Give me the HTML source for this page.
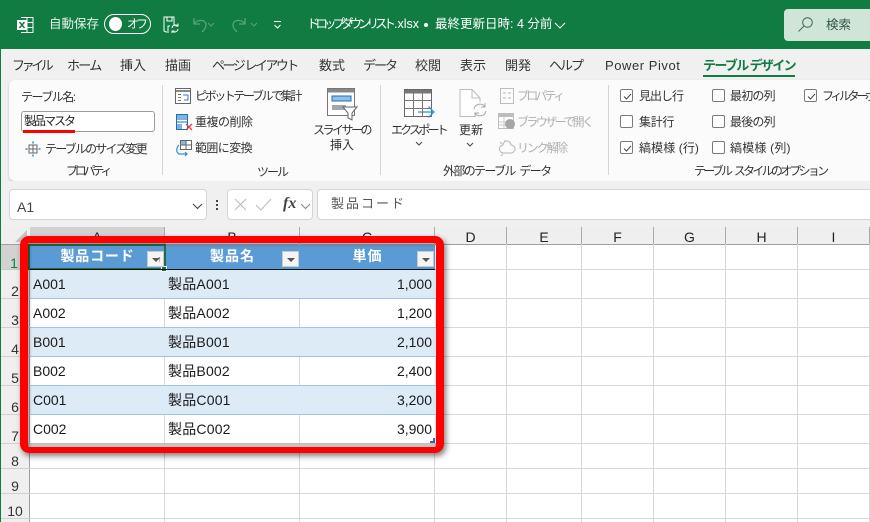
<!DOCTYPE html>
<html><head><meta charset="utf-8"><style>
*{box-sizing:border-box}
html,body{margin:0;padding:0}
body{width:870px;height:522px;overflow:hidden;position:relative;background:#fff;font-family:"Liberation Sans","Noto Sans CJK JP",sans-serif;color:#333}
.a{position:absolute;white-space:nowrap}
.t{position:absolute;white-space:nowrap;font-size:12px;line-height:16px;color:#333}
.tb{position:absolute;white-space:nowrap;font-size:13px;line-height:18px;top:57px;color:#333}
.g{color:#b0b0b0}
.hl{position:absolute;left:30px;width:840px;height:1px;background:#d8d8d8}
.vl{position:absolute;top:244px;height:278px;width:1px;background:#d8d8d8}
.rn{position:absolute;left:1px;width:28px;text-align:center;font-size:14px;line-height:16px;color:#333}
.cn{position:absolute;top:229px;text-align:center;font-size:14px;line-height:16px;color:#222}
.cell{position:absolute;font-size:14px;line-height:18px;color:#1a1a1a;white-space:nowrap}
.hd{position:absolute;top:245px;height:24px;background:#5b9bd5;color:#fff;font-weight:bold;font-size:14px;line-height:22px;text-align:center}
.fb{position:absolute;top:251px;width:17px;height:16px;background:#f4f4f4;border:1px solid #c9c9c9}
.fb:after{content:"";position:absolute;left:4px;top:6px;border-left:4px solid transparent;border-right:4px solid transparent;border-top:4px solid #555}
.cb{position:absolute;width:13px;height:13px;border:1px solid #7a7a7a;border-radius:2px;background:#fff}
.cb svg{position:absolute;left:1px;top:1px}
</style></head><body>
<!-- title bar -->
<div class="a" style="left:0;top:0;width:870px;height:49px;background:#107c41"></div>
<svg class="a" style="left:16px;top:15px" width="18" height="19" viewBox="0 0 18 19"><path d="M5 2.5H17V17.5H5M11 2.5V17.5M5 7.5H17M5 12.5H17" fill="none" stroke="#fff" stroke-width="1"/><rect x="1" y="5" width="10" height="10" fill="#fff"/><path d="M3.5 7l5 6M8.500 7l-5 6" stroke="#107c41" stroke-width="1.500"/></svg>
<div class="a" style="left:49px;top:16px;font-size:12.500px;line-height:17px;color:#e6f2ea">自動保存</div>
<div class="a" style="left:104px;top:14px;width:47px;height:20px;border:1px solid #fff;border-radius:10px"></div>
<div class="a" style="left:109px;top:17px;width:13px;height:14px;border-radius:50%;background:#fff"></div>
<div class="a" style="left:127px;top:16px;font-size:12px;line-height:17px;color:#fff;letter-spacing:-3px">オフ</div>
<svg class="a" style="left:163px;top:16px" width="17" height="17" viewBox="0 0 17 17"><path d="M11 10V1H1V15l2 1h3M4 1v4h5V1M5 15V10h2" fill="none" stroke="#fff" stroke-width="1"/><path d="M9 12a3.500 3.500 0 0 1 6-2M15 13a3.500 3.500 0 0 1-6 2M15 7.500V10h-2.500M9 17.500V15h2.500" fill="none" stroke="#fff" stroke-width="1"/></svg>
<svg class="a" style="left:192px;top:16px" width="34" height="18" viewBox="0 0 34 18"><path d="M2 2V8H8M2 8C5 3 14 3 14 9C14 12 12 14 10 16" fill="none" stroke="#5aa37d" stroke-width="1.300"/><path d="M22 7l3 3 3-3" fill="none" stroke="#5aa37d" stroke-width="1" transform="translate(-6 0)"/></svg>
<svg class="a" style="left:231px;top:16px" width="34" height="18" viewBox="0 0 34 18"><path d="M14 2V8H8M14 8C11 3 2 3 2 9C2 12 4 14 6 16" fill="none" stroke="#5aa37d" stroke-width="1.300"/><path d="M20 7l3 3 3-3" fill="none" stroke="#5aa37d" stroke-width="1"/></svg>
<svg class="a" style="left:273px;top:20px" width="10" height="10" viewBox="0 0 10 10"><path d="M1 1.500H8M1.500 5l3 3 3-3" fill="none" stroke="#fff" stroke-width="1"/></svg>
<div class="a" style="left:307px;top:16px;font-size:12.500px;line-height:17px;color:#fff"><span style="letter-spacing:-4px">ドロップダウンリスト</span><span style="margin-left:2px">.xlsx</span></div>
<div class="a" style="left:424px;top:23px;width:4px;height:4px;border-radius:50%;background:#fff"></div>
<div class="a" style="left:435px;top:16px;font-size:12.500px;line-height:17px;color:#fff">最終更新日時: 4 分前</div>
<svg class="a" style="left:554px;top:22px" width="12" height="8" viewBox="0 0 12 8"><path d="M1 1l5 5 5-5" fill="none" stroke="#fff" stroke-width="1.100"/></svg>
<div class="a" style="left:784px;top:9px;width:86px;height:32px;background:#cfe5d8;border-radius:4px 0 0 4px"></div>
<svg class="a" style="left:797px;top:16px" width="17" height="17" viewBox="0 0 17 17"><circle cx="10.500" cy="6.500" r="4.800" fill="none" stroke="#3f6b52" stroke-width="1"/><path d="M7 10L1.500 15.500" stroke="#3f6b52" stroke-width="1"/></svg>
<div class="a" style="left:826px;top:16px;font-size:12.500px;line-height:18px;color:#33584a">検索</div>
<!-- tab row -->
<div class="a" style="left:0;top:49px;width:870px;height:141px;background:#f0f0f0"></div>
<div class="a" style="left:0;top:49px;width:1px;height:473px;background:#107c41"></div>
<div class="tb" style="left:12px;letter-spacing:-3.400px">ファイル</div>
<div class="tb" style="left:67px;letter-spacing:-1.700px">ホーム</div>
<div class="tb" style="left:120px">挿入</div>
<div class="tb" style="left:165px">描画</div>
<div class="tb" style="left:212px;letter-spacing:-2.500px">ページ レイアウト</div>
<div class="tb" style="left:319px">数式</div>
<div class="tb" style="left:363px;letter-spacing:-2px">データ</div>
<div class="tb" style="left:415px">校閲</div>
<div class="tb" style="left:460px">表示</div>
<div class="tb" style="left:505px">開発</div>
<div class="tb" style="left:549px;letter-spacing:-2px">ヘルプ</div>
<div class="tb" style="left:605px;letter-spacing:.55px">Power Pivot</div>
<div class="tb" style="left:703px;color:#107c41;font-weight:bold;letter-spacing:-1.650px">テーブル デザイン</div>
<div class="a" style="left:703px;top:75px;width:92px;height:2px;background:#107c41"></div>
<!-- ribbon -->
<div class="a" style="left:9px;top:80px;width:861px;height:101px;background:#fbfbfb;border-radius:6px 0 0 6px;box-shadow:0 1px 2px #bbb"></div>
<div class="a" style="left:162px;top:85px;width:1px;height:90px;background:#d5d5d5"></div>
<div class="a" style="left:380px;top:85px;width:1px;height:90px;background:#d5d5d5"></div>
<div class="a" style="left:608px;top:85px;width:1px;height:90px;background:#d5d5d5"></div>
<div class="t" style="left:21px;top:89px;letter-spacing:-1.500px">テーブル名:</div>
<div class="a" style="left:21px;top:111px;width:134px;height:21px;background:#fff;border:1px solid #9a9a9a;border-radius:3px"></div>
<div class="t" style="left:24px;top:113px;color:#222;letter-spacing:-2px">製品マスタ</div>
<div class="a" style="left:23px;top:130px;width:52px;height:3px;background:#ff0000"></div>
<svg class="a" style="left:25px;top:141px" width="16" height="16" viewBox="0 0 16 16"><rect x="4" y="4" width="8" height="8" fill="none" stroke="#666"/><path d="M4 8h8M8 4v8" stroke="#666"/><path d="M8 .5v2M8 13.500v2M.5 8h2M13.500 8h2" stroke="#2b8fd8" stroke-width="1.500"/></svg>
<div class="t" style="left:45px;top:141px;letter-spacing:-1.800px">テーブルのサイズ変更</div>
<div class="t" style="left:66px;top:163px;letter-spacing:-3.200px">プロパティ</div>
<svg class="a" style="left:175px;top:88px" width="16" height="16" viewBox="0 0 16 16"><rect x=".5" y=".5" width="15" height="15" fill="#fff" stroke="#666"/><path d="M1 3h14" stroke="#888" stroke-width="2"/><path d="M3 6h3v1H3zM3 9h3v1H3zM3 12h3v1H3z" fill="#777"/><path d="M8 7h5v5H9" fill="none" stroke="#2b7cd3"/></svg>
<div class="t" style="left:195px;top:88px;letter-spacing:-2.400px">ピボットテーブルで集計</div>
<svg class="a" style="left:176px;top:114px" width="17" height="17" viewBox="0 0 17 17"><rect x=".5" y=".5" width="11" height="15" fill="#fff" stroke="#1f6fb5"/><rect x="1" y="1" width="10" height="5" fill="#7fb2df"/><rect x="1" y="10" width="5" height="5" fill="#7fb2df"/><path d="M.5 8h11" stroke="#1f6fb5"/><path d="M10 10l6 6M16 10l-6 6" stroke="#e04040" stroke-width="1.300"/></svg>
<div class="t" style="left:195px;top:114px;letter-spacing:-.5px">重複の削除</div>
<svg class="a" style="left:175px;top:140px" width="18" height="17" viewBox="0 0 18 17"><rect x="5.500" y=".5" width="11" height="9" fill="#fff" stroke="#666"/><rect x="6" y="1" width="5" height="4" fill="#8fb9dc"/><path d="M5.500 5h11M11 1v8" stroke="#666"/><path d="M4 5C1 8 1 12 4 14H12M10 12l2 2-2 2" fill="none" stroke="#2b8fd8" stroke-width="1.200"/></svg>
<div class="t" style="left:195px;top:140px;letter-spacing:-.6px">範囲に変換</div>
<div class="t" style="left:257px;top:164px;letter-spacing:-2px">ツール</div>
<svg class="a" style="left:327px;top:88px" width="32" height="33" viewBox="0 0 32 33"><rect x=".5" y=".5" width="27" height="27" fill="#fff" stroke="#777"/><rect x="1" y="1" width="26" height="3.500" fill="#888"/><rect x="5" y="8" width="19" height="5" fill="#8fc0e8" stroke="#1f6fb5"/><rect x="5" y="17" width="14" height="5" fill="#a6a6a6"/><path d="M16 19H30L25 25V32L21 30V25Z" fill="#fff" stroke="#666"/></svg>
<div class="t" style="left:313px;top:122px;letter-spacing:-2.500px">スライサーの</div>
<div class="t" style="left:330px;top:137px;">挿入</div>
<svg class="a" style="left:404px;top:89px" width="31" height="30" viewBox="0 0 31 30"><rect x=".5" y=".5" width="27" height="27" fill="#fff" stroke="#666"/><rect x="1" y="1" width="26" height="3.500" fill="#777"/><path d="M.5 11.500h27M.5 19.500h27M9.500 4v24M18.500 4v24" stroke="#777"/><path d="M14 23H29M24.500 17.500L30 23L24.500 28.500" fill="none" stroke="#2b8fd8" stroke-width="1.200"/></svg>
<div class="t" style="left:391px;top:122px;letter-spacing:-2.800px">エクスポート</div>
<svg class="a" style="left:415px;top:141px" width="8" height="6" viewBox="0 0 8 6"><path d="M1 1l3 3 3-3" fill="none" stroke="#444"/></svg>
<svg class="a" style="left:459px;top:89px" width="29" height="30" viewBox="0 0 29 30"><path d="M1 .5H13L21 9V27.500H1Z" fill="#fff" stroke="#bdbdbd"/><path d="M13 1V9H21" fill="none" stroke="#bdbdbd"/><circle cx="21" cy="21" r="8" fill="#fbfbfb"/><path d="M15 20a6 6 0 0 1 11-2M27 22a6 6 0 0 1-11 2M26 14v4h-4M16 28v-4h4" fill="none" stroke="#a8a8a8"/></svg>
<div class="t" style="left:459px;top:122px">更新</div>
<svg class="a" style="left:466px;top:142px" width="8" height="6" viewBox="0 0 8 6"><path d="M1 1l3 3 3-3" fill="none" stroke="#444"/></svg>
<svg class="a" style="left:500px;top:88px" width="14" height="16" viewBox="0 0 14 16"><rect x=".5" y=".5" width="13" height="15" fill="none" stroke="#bdbdbd"/><path d="M3 5h3M8 5h3M3 10h3M8 10h3" stroke="#b5b5b5"/></svg>
<div class="t g" style="left:517px;top:88px;letter-spacing:-2.800px">プロパティ</div>
<svg class="a" style="left:498px;top:113px" width="18" height="17" viewBox="0 0 18 17"><rect x=".5" y=".5" width="15" height="15" fill="#fff" stroke="#bdbdbd"/><rect x="1" y="1" width="14" height="3" fill="#bdbdbd"/><path d="M1 9h14M1 12h14M6 4v12" stroke="#c8c8c8"/><circle cx="12" cy="11" r="5" fill="#a6a6a6"/></svg>
<div class="t g" style="left:517px;top:114px;letter-spacing:-2.600px">ブラウザーで開く</div>
<svg class="a" style="left:498px;top:139px" width="18" height="18" viewBox="0 0 18 18"><path d="M5 6a4 4 0 0 1 8 0 4 4 0 0 1 0 8H6a4 4 0 0 1-1-8ZM2 3l2 2M7 1v2M5 15l-2 2" fill="none" stroke="#b5b5b5"/></svg>
<div class="t g" style="left:517px;top:140px;letter-spacing:-2.200px">リンク解除</div>
<div class="t" style="left:443px;top:163px;letter-spacing:-1.650px;word-spacing:3px">外部のテーブル データ</div>
<div class="cb" style="left:620px;top:89px"><svg width="11" height="11" viewBox="0 0 11 11"><path d="M2 5.500l2.500 2.500 4.500-5" fill="none" stroke="#444"/></svg></div>
<div class="t" style="left:639px;top:88px;letter-spacing:-1px">見出し行</div>
<div class="cb" style="left:712px;top:89px"></div>
<div class="t" style="left:730px;top:88px;letter-spacing:-.8px">最初の列</div>
<div class="cb" style="left:804px;top:89px"><svg width="11" height="11" viewBox="0 0 11 11"><path d="M2 5.500l2.500 2.500 4.500-5" fill="none" stroke="#444"/></svg></div>
<div class="t" style="left:822px;top:88px;width:48px;overflow:hidden;letter-spacing:-3.400px">フィルター ボタン</div>
<div class="cb" style="left:620px;top:115px"></div>
<div class="t" style="left:639px;top:114px;letter-spacing:-.3px">集計行</div>
<div class="cb" style="left:712px;top:115px"></div>
<div class="t" style="left:730px;top:114px;letter-spacing:-.8px">最後の列</div>
<div class="cb" style="left:620px;top:141px"><svg width="11" height="11" viewBox="0 0 11 11"><path d="M2 5.500l2.500 2.500 4.500-5" fill="none" stroke="#444"/></svg></div>
<div class="t" style="left:639px;top:140px;letter-spacing:.1px">縞模様 (行)</div>
<div class="cb" style="left:712px;top:141px"></div>
<div class="t" style="left:730px;top:140px;letter-spacing:.2px">縞模様 (列)</div>
<div class="t" style="left:694px;top:163px;letter-spacing:-2.750px;word-spacing:3px">テーブル スタイルのオプション</div>
<!-- formula bar -->
<div class="a" style="left:0;top:181px;width:870px;height:48px;background:#f0f0f0"></div>
<div class="a" style="left:0;top:181px;width:1px;height:48px;background:#107c41"></div>
<div class="a" style="left:9px;top:189px;width:198px;height:31px;background:#fff;border:1px solid #d4d4d4;border-radius:4px"></div>
<div class="a" style="left:17px;top:199px;font-size:14px;line-height:17px;color:#444">A1</div>
<svg class="a" style="left:192px;top:203px" width="11" height="7" viewBox="0 0 11 7"><path d="M1 1l4.500 4.500L10 1" fill="none" stroke="#444" stroke-width="1.100"/></svg>
<div class="a" style="left:216px;top:200px;width:2px;height:2px;background:#444;box-shadow:0 4px #444,0 8px #444"></div>
<div class="a" style="left:227px;top:189px;width:86px;height:31px;background:#fff;border:1px solid #d4d4d4;border-radius:4px"></div>
<svg class="a" style="left:233px;top:197px" width="16" height="16" viewBox="0 0 16 16"><path d="M2 2l11 11M13 2L2 13" stroke="#bdbdbd" stroke-width="1.100" fill="none"/></svg>
<svg class="a" style="left:255px;top:197px" width="18" height="16" viewBox="0 0 18 16"><path d="M1 8l5 5L16 2" stroke="#bdbdbd" stroke-width="1.100" fill="none"/></svg>
<div class="a" style="left:283px;top:194px;font-family:'Liberation Serif',serif;font-style:italic;font-weight:bold;font-size:16px;line-height:20px;color:#444">fx</div>
<svg class="a" style="left:300px;top:203px" width="11" height="7" viewBox="0 0 11 7"><path d="M1 1l4.500 4.500L10 1" fill="none" stroke="#888" stroke-width="1"/></svg>
<div class="a" style="left:317px;top:189px;width:553px;height:31px;background:#fff;border:1px solid #d4d4d4;border-right:none;border-radius:4px 0 0 4px"></div>
<div class="a" style="left:331px;top:195px;font-size:13px;line-height:18px;color:#555;letter-spacing:2px">製品コード</div>
<!-- column headers -->
<div class="a" style="left:1px;top:227px;width:869px;height:17px;background:#efefef"></div>
<div class="a" style="left:30px;top:227px;width:135px;height:17px;background:#d2d2d2"></div>
<div class="a" style="left:1px;top:244px;width:869px;height:1px;background:#9f9f9f"></div>
<svg class="a" style="left:15px;top:230px" width="12" height="12" viewBox="0 0 12 12"><path d="M12 0V12H0Z" fill="#c4c4c4"/></svg>
<div class="a" style="left:164px;top:227px;width:1px;height:17px;background:#aaa"></div>
<div class="a" style="left:299px;top:227px;width:1px;height:17px;background:#aaa"></div>
<div class="a" style="left:434px;top:227px;width:1px;height:17px;background:#aaa"></div>
<div class="a" style="left:506px;top:227px;width:1px;height:17px;background:#aaa"></div>
<div class="a" style="left:581px;top:227px;width:1px;height:17px;background:#aaa"></div>
<div class="a" style="left:653px;top:227px;width:1px;height:17px;background:#aaa"></div>
<div class="a" style="left:725px;top:227px;width:1px;height:17px;background:#aaa"></div>
<div class="a" style="left:797px;top:227px;width:1px;height:17px;background:#aaa"></div>
<div class="a" style="left:869px;top:227px;width:1px;height:17px;background:#aaa"></div>
<div class="cn" style="left:435px;width:71px">D</div>
<div class="cn" style="left:507px;width:74px">E</div>
<div class="cn" style="left:582px;width:71px">F</div>
<div class="cn" style="left:654px;width:71px">G</div>
<div class="cn" style="left:726px;width:71px">H</div>
<div class="cn" style="left:798px;width:71px">I</div>
<div class="cn" style="left:30px;width:134px">A</div>
<div class="cn" style="left:165px;width:134px">B</div>
<div class="cn" style="left:300px;width:134px">C</div>
<!-- row headers -->
<div class="a" style="left:1px;top:245px;width:29px;height:277px;background:#efefef"></div>
<div class="a" style="left:1px;top:245px;width:29px;height:24px;background:#d2d2d2"></div>
<div class="a" style="left:29px;top:245px;width:1px;height:277px;background:#9f9f9f"></div>
<div class="a" style="left:1px;top:269px;width:29px;height:1px;background:#c8c8c8;box-shadow:0 29px #d0d0d0,0 58px #d0d0d0,0 87px #d0d0d0,0 116px #d0d0d0,0 145px #d0d0d0,0 174px #d0d0d0,0 199px #d0d0d0,0 224px #d0d0d0,0 249px #d0d0d0"></div>
<div class="rn" style="top:255px;color:#107c41;left:0">1</div>
<div class="rn" style="top:283px">2</div>
<div class="rn" style="top:312px">3</div>
<div class="rn" style="top:341px">4</div>
<div class="rn" style="top:370px">5</div>
<div class="rn" style="top:399px">6</div>
<div class="rn" style="top:428px">7</div>
<div class="rn" style="top:453px">8</div>
<div class="rn" style="top:478px">9</div>
<div class="rn" style="top:503px">10</div>
<!-- grid -->
<div class="hl" style="top:269px"></div><div class="hl" style="top:298px"></div><div class="hl" style="top:327px"></div><div class="hl" style="top:356px"></div><div class="hl" style="top:385px"></div><div class="hl" style="top:414px"></div><div class="hl" style="top:443px"></div><div class="hl" style="top:468px"></div><div class="hl" style="top:493px"></div><div class="hl" style="top:518px"></div>
<div class="vl" style="left:164px"></div><div class="vl" style="left:299px"></div><div class="vl" style="left:434px"></div><div class="vl" style="left:506px"></div><div class="vl" style="left:581px"></div><div class="vl" style="left:653px"></div><div class="vl" style="left:725px"></div><div class="vl" style="left:797px"></div><div class="vl" style="left:869px"></div>
<!-- red box shadow -->
<div class="a" style="left:20px;top:236px;width:424px;height:217px;border-radius:9px;box-shadow:2px 3px 6px rgba(0,0,0,.5)"></div>
<!-- table -->
<div class="a" style="left:30px;top:270px;width:405px;height:28px;background:#ddebf7"></div>
<div class="a" style="left:30px;top:299px;width:405px;height:28px;background:#fff"></div>
<div class="a" style="left:30px;top:328px;width:405px;height:28px;background:#ddebf7"></div>
<div class="a" style="left:30px;top:357px;width:405px;height:28px;background:#fff"></div>
<div class="a" style="left:30px;top:386px;width:405px;height:28px;background:#ddebf7"></div>
<div class="a" style="left:30px;top:415px;width:405px;height:28px;background:#fff"></div>
<div class="a" style="left:30px;top:298px;width:405px;height:1px;background:#9dc3e6"></div>
<div class="a" style="left:30px;top:327px;width:405px;height:1px;background:#9dc3e6"></div>
<div class="a" style="left:30px;top:356px;width:405px;height:1px;background:#9dc3e6"></div>
<div class="a" style="left:30px;top:385px;width:405px;height:1px;background:#9dc3e6"></div>
<div class="a" style="left:30px;top:414px;width:405px;height:1px;background:#9dc3e6"></div>
<div class="a" style="left:164px;top:299px;width:1px;height:28px;background:#d8d8d8"></div>
<div class="a" style="left:299px;top:299px;width:1px;height:28px;background:#d8d8d8"></div>
<div class="a" style="left:164px;top:357px;width:1px;height:28px;background:#d8d8d8"></div>
<div class="a" style="left:299px;top:357px;width:1px;height:28px;background:#d8d8d8"></div>
<div class="a" style="left:164px;top:415px;width:1px;height:28px;background:#d8d8d8"></div>
<div class="a" style="left:299px;top:415px;width:1px;height:28px;background:#d8d8d8"></div>
<div class="hd" style="left:30px;width:135px;letter-spacing:.8px">製品コード</div>
<div class="hd" style="left:165px;width:135px;letter-spacing:1px">製品名</div>
<div class="hd" style="left:300px;width:135px;letter-spacing:1px">単価</div>
<div class="a" style="left:28px;top:244px;width:138px;height:26px;border:2px solid #1f6e43"></div>
<div class="a" style="left:161px;top:266px;width:6px;height:6px;background:#1f6e43;border:1px solid #fff"></div>
<div class="a" style="left:30px;top:269px;width:405px;height:1px;background:#111"></div>
<div class="fb" style="left:147px"></div>
<div class="a" style="left:157px;top:254px;font-size:9px;line-height:10px;color:#555">↑</div>
<div class="fb" style="left:282px"></div>
<div class="fb" style="left:417px"></div>
<div class="cell" style="left:33px;top:275px">A001</div><div class="cell" style="left:168px;top:275px;letter-spacing:.2px">製品A001</div><div class="cell" style="right:438px;top:275px">1,000</div>
<div class="cell" style="left:33px;top:304px">A002</div><div class="cell" style="left:168px;top:304px;letter-spacing:.2px">製品A002</div><div class="cell" style="right:438px;top:304px">1,200</div>
<div class="cell" style="left:33px;top:333px">B001</div><div class="cell" style="left:168px;top:333px;letter-spacing:.2px">製品B001</div><div class="cell" style="right:438px;top:333px">2,100</div>
<div class="cell" style="left:33px;top:362px">B002</div><div class="cell" style="left:168px;top:362px;letter-spacing:.2px">製品B002</div><div class="cell" style="right:438px;top:362px">2,400</div>
<div class="cell" style="left:33px;top:391px">C001</div><div class="cell" style="left:168px;top:391px;letter-spacing:.2px">製品C001</div><div class="cell" style="right:438px;top:391px">3,200</div>
<div class="cell" style="left:33px;top:420px">C002</div><div class="cell" style="left:168px;top:420px;letter-spacing:.2px">製品C002</div><div class="cell" style="right:438px;top:420px">3,900</div>
<svg class="a" style="left:430px;top:438px" width="5" height="5" viewBox="0 0 5 5"><path d="M5 0V5H0V3H3V0Z" fill="#44609f"/></svg>
<!-- band under table inside the box -->
<div class="a" style="left:28px;top:443px;width:408px;height:5px;background:linear-gradient(#bdbdbd,#dcdcdc)"></div>
<!-- red box -->
<div class="a" style="left:20px;top:236px;width:424px;height:217px;border-style:solid;border-color:#ff0000;border-width:7px 8px 6px 8px;border-radius:9px;box-shadow:inset 1px 1px 3px rgba(0,0,0,.45)"></div>
</body></html>
